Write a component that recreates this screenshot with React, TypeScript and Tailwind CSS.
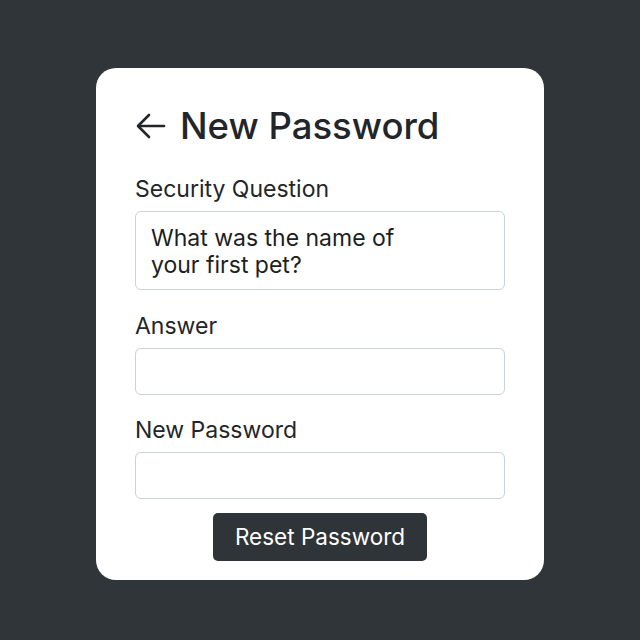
import React from "react";

const font = { fontFamily: "Inter, 'Noto Sans', sans-serif" };

const Field: React.FC<{ label: string; className?: string; children?: React.ReactNode; tall?: boolean }> = ({
  label,
  className,
  children,
  tall,
}) => (
  <div className={className}>
    <div className="text-[23px] leading-[28px] text-[#22262a]">{label}</div>
    <div
      className={`mt-[8px] w-[370px] rounded-[6px] border border-[#c9d1db] bg-white ${
        tall ? "h-[79px] px-[15px] pt-[13px]" : "h-[47px]"
      }`}
    >
      {children}
    </div>
  </div>
);

export default function App() {
  return (
    <div className="flex h-[640px] w-[640px] items-start justify-center bg-[#303539] pt-[68px]" style={font}>
      <div className="h-[512px] w-[448px] rounded-[20px] bg-white pl-[39px]">
        <div className="flex h-[80px] items-center pt-[36px]">
          <svg width="30" height="26" viewBox="0 0 30 26" fill="none" stroke="#22262a" strokeWidth="2.6" strokeLinecap="round" strokeLinejoin="round" className="ml-[1px]">
            <path d="M28 13H3" />
            <path d="M13 2L2 13l11 11" />
          </svg>
          <h1 className="ml-[14px] text-[36.5px] font-medium leading-[44px] text-[#22262a]">
            New Password
          </h1>
        </div>
        <Field label="Security Question" className="mt-[27px]" tall>
          <div className="text-[23px] leading-[27px] text-[#1c1f22]">
            What was the name of
            <br />
            your first pet?
          </div>
        </Field>
        <Field label="Answer" className="mt-[22px]" />
        <Field label="New Password" className="mt-[21px]" />
        <div className="mt-[14px] flex w-[370px] justify-center">
          <button className="h-[48px] w-[214px] rounded-[5px] bg-[#2f3439] text-[22.5px] text-white">
            Reset Password
          </button>
        </div>
      </div>
    </div>
  );
}
